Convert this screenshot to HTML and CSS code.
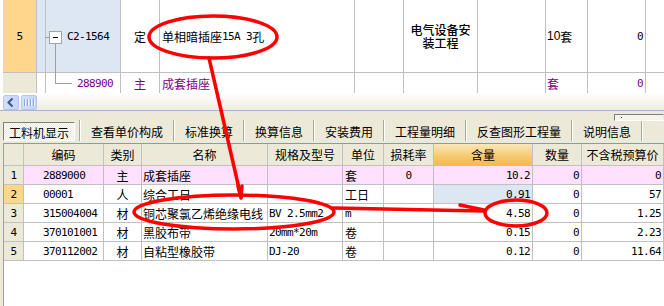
FILE: index.html
```html
<!DOCTYPE html>
<html lang="zh-CN">
<head>
<meta charset="utf-8">
<title>工料机显示</title>
<link rel="stylesheet" href="styles.css">
</head>
<body>
<div class="app">
  <div class="top">
    <div class="tgrid">
      <div class="c r1 onum m">5</div>
      <div class="c r1 blue"></div>
      <div class="c r1 blue code">
        <span class="tree-stub"></span><span class="tree-box"></span><span class="tree-v"></span>
        <span class="m">C2-1564</span>
      </div>
      <div class="c r1 ctr">定</div>
      <div class="c r1 name">单相暗插座<span class="m">15A 3</span>孔</div>
      <div class="c r1"></div>
      <div class="c r1 ctr prof">电气设备安<br>装工程</div>
      <div class="c r1"></div>
      <div class="c r1 unit"><span class="sans">10</span>套</div>
      <div class="c r1 rt m">0</div>
      <div class="c r1 last"></div>

      <div class="c bnum"></div>
      <div class="c"></div>
      <div class="c code2 pu m">288900</div>
      <div class="c ctr pu">主</div>
      <div class="c name pu">成套插座</div>
      <div class="c"></div>
      <div class="c"></div>
      <div class="c"></div>
      <div class="c unit pu">套</div>
      <div class="c rt pu m">0</div>
      <div class="c last"></div>
    </div>
    <div class="hscroll">
      <div class="sbtn">
        <svg width="14" height="13" viewBox="0 0 14 13"><polyline points="8.5,2.5 4.5,6.5 8.5,10.5" fill="none" stroke="#3F5787" stroke-width="2"/></svg>
      </div>
      <div class="sthumb"><span></span><span></span><span></span><span></span></div>
    </div>
  </div>

  <div class="tabs">
    <div class="tab sel">工料机显示</div>
    <span class="sep"></span>
    <div class="tab">查看单价构成</div>
    <span class="sep"></span>
    <div class="tab">标准换算</div>
    <span class="sep"></span>
    <div class="tab">换算信息</div>
    <span class="sep"></span>
    <div class="tab">安装费用</div>
    <span class="sep"></span>
    <div class="tab">工程量明细</div>
    <span class="sep"></span>
    <div class="tab">反查图形工程量</div>
    <span class="sep"></span>
    <div class="tab">说明信息</div>
    <span class="sep"></span>
    <div class="splitter"><i></i></div>
  </div>

  <div class="bottom">
    <div class="bgrid">
      <div class="h"></div><div class="h">编码</div><div class="h">类别</div><div class="h">名称</div><div class="h">规格及型号</div><div class="h">单位</div><div class="h">损耗率</div><div class="h hl">含量</div><div class="h">数量</div><div class="h">不含税预算价</div>

      <div class="rn m">1</div><div class="pk cd m">2889000</div><div class="pk ctr">主</div><div class="pk nm">成套插座</div><div class="pk"></div><div class="pk un">套</div><div class="pk ctr m">0</div><div class="pk rt m">10.2</div><div class="pk rt m">0</div><div class="pk rt m">0</div>

      <div class="rn on m">2</div><div class="cd m">00001</div><div class="ctr">人</div><div class="nm">综合工日</div><div></div><div class="un">工日</div><div></div><div class="rt m lb">0.91</div><div class="rt m">0</div><div class="rt m">57</div>

      <div class="rn m">3</div><div class="cd m">315004004</div><div class="ctr">材</div><div class="nm">铜芯聚氯乙烯绝缘电线</div><div class="nm m">BV 2.5mm2</div><div class="un m">m</div><div></div><div class="rt m">4.58</div><div class="rt m">0</div><div class="rt m">1.25</div>

      <div class="rn m">4</div><div class="cd m">370101001</div><div class="ctr">材</div><div class="nm">黑胶布带</div><div class="nm m">20mm*20m</div><div class="un">卷</div><div></div><div class="rt m">0.15</div><div class="rt m">0</div><div class="rt m">2.23</div>

      <div class="rn m">5</div><div class="cd m">370112002</div><div class="ctr">材</div><div class="nm">自粘型橡胶带</div><div class="nm m">DJ-20</div><div class="un">卷</div><div></div><div class="rt m">0.12</div><div class="rt m">0</div><div class="rt m">11.64</div>
    </div>
  </div>

  <svg class="annot" width="664" height="306" viewBox="0 0 664 306">
    <g fill="none" stroke="#ff0000" stroke-width="3.5" stroke-linecap="round" stroke-linejoin="round">
      <ellipse cx="213" cy="37" rx="64" ry="21"/>
      <path d="M209 58 L241 197"/>
      <path d="M238 186 L241 198 L242 186"/>
      <ellipse cx="234" cy="212" rx="100" ry="17"/>
      <path d="M333 208 L384 209 L432 210 L484 211"/>
      <path d="M460 205 L484 210"/>
      <ellipse cx="516" cy="213" rx="31" ry="13"/>
    </g>
  </svg>
</div>
</body>
</html>
```

FILE: styles.css
```css
* { box-sizing: border-box; margin: 0; padding: 0; }

body {
  width: 664px;
  height: 306px;
  overflow: hidden;
  background: #ECE9D8;
  font-family: "Noto Sans CJK SC", sans-serif;
  font-size: 12px;
  color: #000;
}

.app { position: relative; width: 664px; height: 306px; }

.m { font-family: "DejaVu Sans Mono", "Noto Sans CJK SC", monospace; font-size: 11px; letter-spacing: -0.6px; }
.sans { font-family: "Liberation Sans", sans-serif; font-size: 12px; }
.pu { color: #800080; }

/* ---------- top grid ---------- */
.top {
  height: 111px;
  background: #fff;
  padding-left: 3px;
  border-bottom: 1px solid #A7B6CC;
}

.tgrid {
  display: grid;
  grid-template-columns: 34px 9px 75px 39px 195px 49px 74px 68px 42px 58px 18px;
  grid-template-rows: 73px 20px;
}

.tgrid .c {
  border-right: 1px solid #C0C0C0;
  display: flex;
  align-items: center;
  white-space: nowrap;
}
.tgrid .r1 { border-bottom: 1px solid #C0C0C0; }
.tgrid .last { border-right: none; }

.tgrid .onum { background: #FFD68C; justify-content: center; }
.tgrid .bnum { background: #ECE9D8; }
.tgrid .blue { background: #DDE7F4; }
.tgrid .ctr { justify-content: center; text-align: center; }
.tgrid .rt { justify-content: flex-end; padding-right: 2px; }
.tgrid .name { padding-left: 2px; }
.tgrid .unit { padding-left: 1px; }
.tgrid .prof { line-height: 13px; font-weight: 500; padding-bottom: 1px; }

.tgrid .code { position: relative; padding-left: 21px; }
.tgrid .code2 { padding-left: 31px; }

.tree-stub {
  position: absolute; left: -1px; top: 37px;
  width: 4px; height: 1px; background: #A0A0A0;
}
.tree-box {
  position: absolute; left: 3px; top: 31px;
  width: 13px; height: 13px;
  border: 1px solid #A4A4A4; background: #fff;
}
.tree-box::after {
  content: ""; position: absolute; left: 3px; top: 5px;
  width: 5px; height: 1px; background: #000;
}
.tree-v {
  position: absolute; left: 9px; top: 44px;
  width: 17px; height: 40px;
  border-left: 1px solid #A0A0A0;
  border-bottom: 1px solid #A0A0A0;
}

/* ---------- scrollbar ---------- */
.hscroll {
  height: 17px;
  display: flex;
  align-items: flex-end;
  gap: 2px;
  background: linear-gradient(#FFFFFF, #F6F5F0 50%, #EEECE3);
}
.sbtn, .sthumb {
  width: 16px; height: 15px;
  border: 1px solid #B4C6F1;
  border-radius: 2px;
  background: linear-gradient(90deg, #D3E0FD, #C3D3FB);
  display: flex; align-items: center; justify-content: center;
}
.sthumb { gap: 1px; }
.sthumb span { width: 1px; height: 7px; background: #8FA6DB; box-shadow: 1px 0 0 #EEF3FE; margin-right: 1px; }

/* ---------- tabs ---------- */
.tabs {
  position: relative;
  height: 32px;
  display: flex;
  align-items: flex-end;
  padding: 0 0 2px 3px;
}
.tab {
  height: 19px;
  line-height: 19px;
  padding: 0 10px;
  white-space: nowrap;
}
.tab.sel {
  width: 72px;
  padding: 0;
  text-align: center;
  margin-right: 4px;
  border: 1px solid;
  border-color: #808080 #FFFFFF #FFFFFF #808080;
  background: repeating-conic-gradient(#FFFFFF 0 25%, #ECE9D8 0 50%) 0 0 / 2px 2px;
}
.sep {
  width: 2px; height: 21px;
  border-left: 1px solid #ACA899;
  border-right: 1px solid #FFFFFF;
}
.splitter {
  position: absolute; left: 614px; top: 3px;
  width: 50px; height: 7px;
  border: 1px solid; border-color: #7F7F7F #ECE9D8 #FFFFFF #7F7F7F;
  background: #F4F3EE;
}
.splitter i {
  position: absolute; left: 6px; top: 2px;
  width: 1px; height: 1px; background: #333;
}

/* ---------- bottom grid ---------- */
.bottom {
  height: 163px;
  margin-left: 3px;
  border-top: 1px solid #7F9DB9;
  border-left: 1px solid #A0A0A0;
  background: #fff;
}
.bgrid {
  display: grid;
  grid-template-columns: 20px 80px 38px 126px 75px 41px 50px 99px 49px 82px;
  grid-template-rows: 22px repeat(5, 19px);
}
.bgrid > div {
  border-right: 1px solid #C0C0C0;
  border-bottom: 1px solid #C0C0C0;
  display: flex;
  align-items: center;
  white-space: nowrap;
}
.bgrid .h { background: #ECE9D8; justify-content: center; }
.bgrid .h.hl { background: linear-gradient(#FCE7B9, #F5C86F 60%, #F2BB55); }
.bgrid .rn { background: #ECE9D8; justify-content: center; }
.bgrid .rn.on { background: #FFD68C; }
.bgrid .pk { background: #FFE1FF; }
.bgrid .lb { background: #DDE7F4; }
.bgrid .ctr { justify-content: center; }
.bgrid .rt { justify-content: flex-end; padding-right: 2px; }
.bgrid .cd { padding-left: 19px; }
.bgrid .nm { padding-left: 1px; }
.bgrid .un { padding-left: 2px; }

/* ---------- annotation overlay ---------- */
.annot { position: absolute; left: 0; top: 0; pointer-events: none; }
```
